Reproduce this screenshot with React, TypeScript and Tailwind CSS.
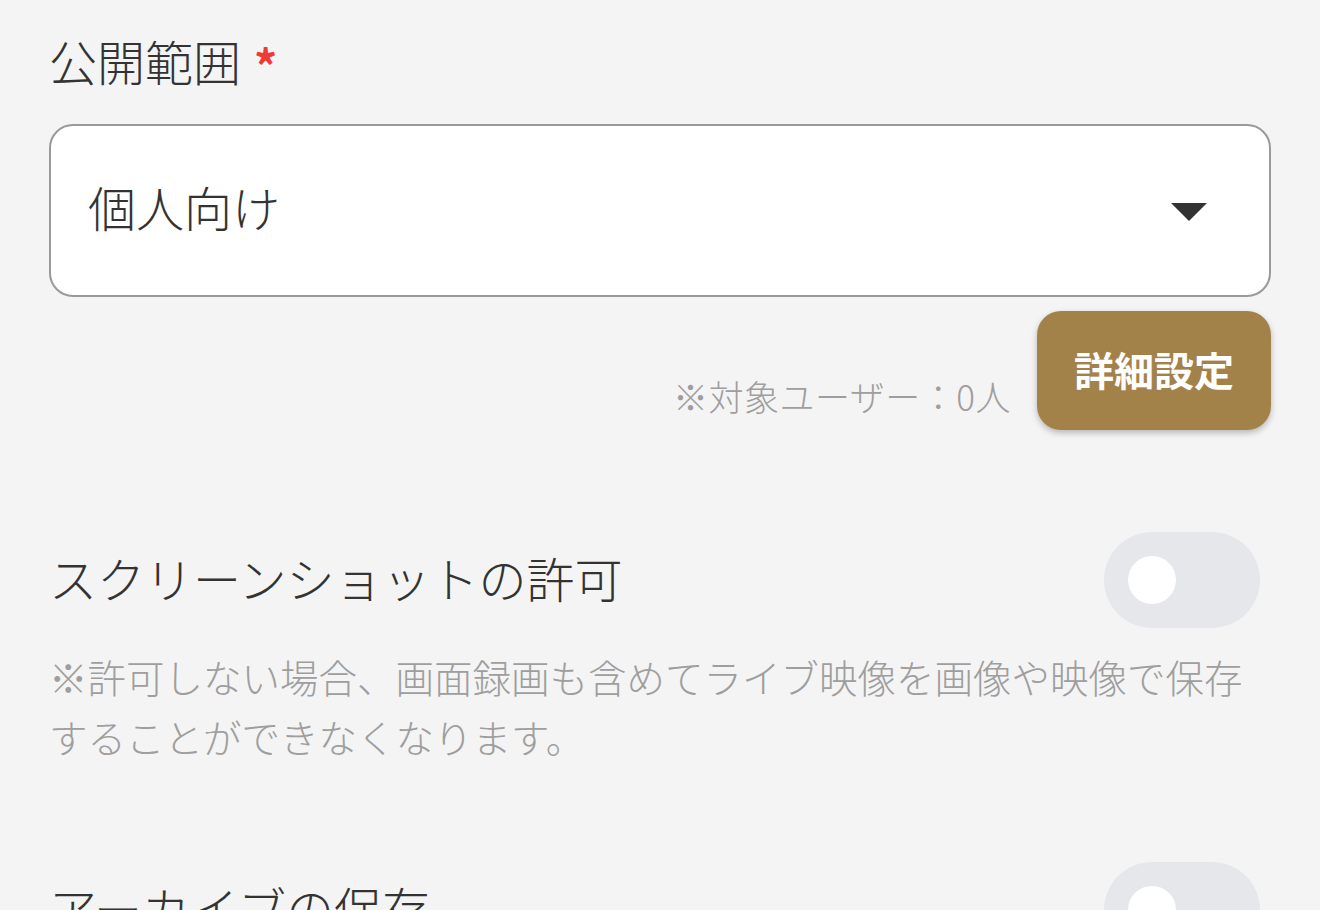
import { useState } from 'react';

/* 公開設定フォーム — 公開範囲 / スクリーンショット / アーカイブ */

const FONT = { fontFamily: '"Noto Sans CJK JP", "Noto Sans", sans-serif' };

function Toggle({ checked, onChange }: { checked: boolean; onChange: (v: boolean) => void }) {
    return (
        <button
            type="button"
            onClick={() => onChange(!checked)}
            className={`shrink-0 mr-[11px] w-[156px] h-[96px] rounded-full flex items-center px-[24px] ${checked ? 'bg-[#a3824a] justify-end' : 'bg-[#e5e7eb] justify-start'}`}
        >
            <span className="block w-[48px] h-[48px] rounded-full bg-white" />
        </button>
    );
}

export default function App() {
    const [screenshot, setScreenshot] = useState(false);
    const [archive, setArchive] = useState(false);

    return (
        <div className="min-h-screen bg-[#f4f4f4] px-[49px] pt-[27px] overflow-hidden font-light" style={FONT}>
            {/* 公開範囲 */}
            <div className="flex items-start h-[67px]">
                <span className="text-[48px] leading-[67px] text-[#333333]">公開範囲</span>
                <span className="ml-[13px] mt-[14px] text-[46px] leading-[46px] font-semibold text-[#ee3b36]">*</span>
            </div>

            <div className="mt-[30px] h-[173px] rounded-[24px] border-2 border-[#999999] bg-white flex items-center justify-between pl-[37px] pr-[62px]">
                <span className="mb-[9px] text-[48px] leading-none text-[#333333]">個人向け</span>
                <svg width="36" height="18" viewBox="0 0 36 18" className="mt-[2px]">
                    <path d="M0 0 H36 L18 18 Z" fill="#333333" />
                </svg>
            </div>

            <div className="flex justify-end items-end gap-[26px] mt-[14px]">
                <span className="mb-[10px] text-[35px] leading-[49px] text-[#9e9e9e] tracking-[0.5px]">※対象ユーザー：0人</span>
                <button
                    type="button"
                    className="w-[234px] h-[119px] rounded-[24px] bg-[#a3824a] text-white text-[40px] font-bold pb-[4px] shadow-[0_3px_6px_rgba(0,0,0,0.25)]"
                >
                    詳細設定
                </button>
            </div>

            {/* スクリーンショットの許可 */}
            <div className="mt-[102px] flex items-center justify-between">
                <span className="pb-[6px] text-[48px] leading-[67px] text-[#333333]">スクリーンショットの許可</span>
                <Toggle checked={screenshot} onChange={setScreenshot} />
            </div>
            <p className="mt-[18px] pr-[20px] text-[38.5px] leading-[60px] text-[#9e9e9e]">
                ※許可しない場合、画面録画も含めてライブ映像を画像や映像で保存することができなくなります。
            </p>

            {/* アーカイブの保存 */}
            <div className="mt-[96px] flex items-center justify-between">
                <span className="pb-[6px] text-[48px] leading-[67px] text-[#333333]">アーカイブの保存</span>
                <Toggle checked={archive} onChange={setArchive} />
            </div>
        </div>
    );
}
